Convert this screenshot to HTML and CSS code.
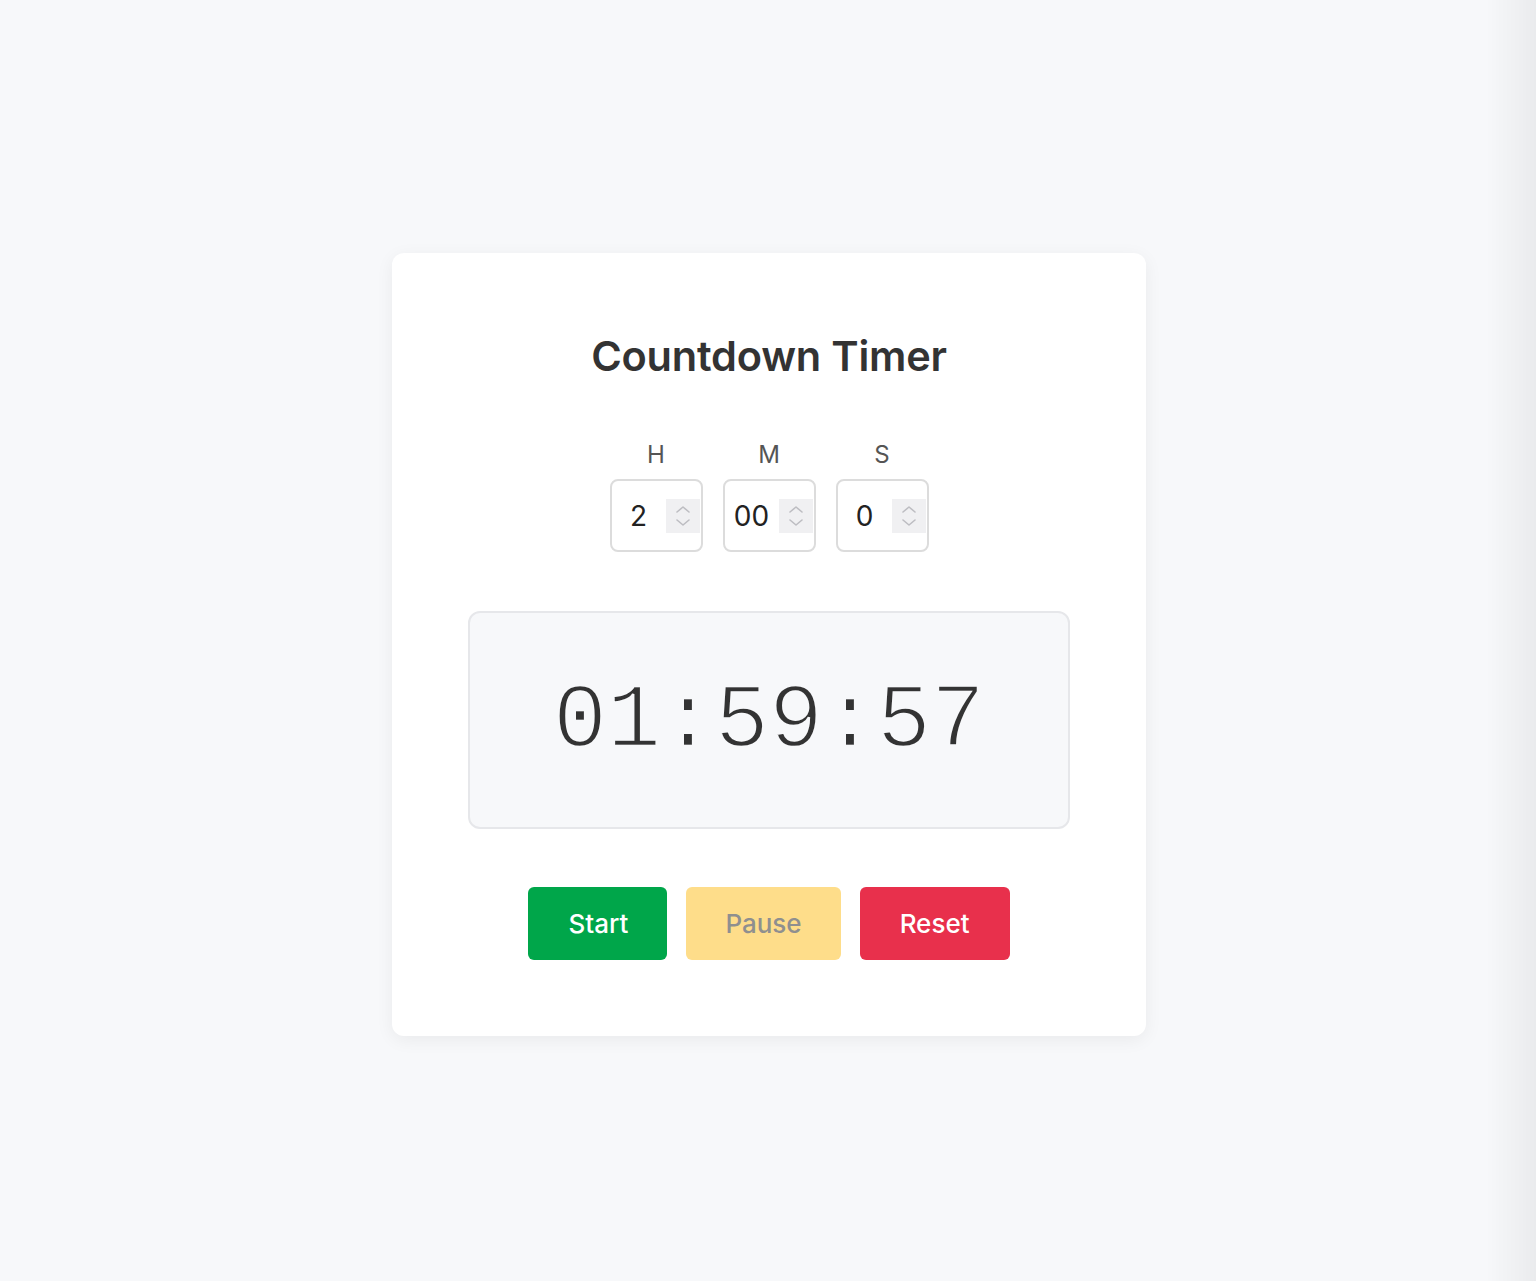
FILE: index.html
```html
<!DOCTYPE html>
<html lang="en">
<head>
<meta charset="utf-8">
<title>Countdown Timer</title>
<link rel="stylesheet" href="styles.css">
</head>
<body>
<div class="edge-shade"></div>
<main class="page">
  <section class="card">
    <h1 class="title">Countdown Timer</h1>
    <div class="fields">
      <div class="field">
        <span class="field-label">H</span>
        <div class="num-input">
          <span class="num-value">2</span>
          <span class="spinner">
            <svg viewBox="0 0 14 20" width="14" height="20"><path d="M1 6 L7 1 L13 6" /><path d="M1 14 L7 19 L13 14" /></svg>
          </span>
        </div>
      </div>
      <div class="field">
        <span class="field-label">M</span>
        <div class="num-input">
          <span class="num-value">00</span>
          <span class="spinner">
            <svg viewBox="0 0 14 20" width="14" height="20"><path d="M1 6 L7 1 L13 6" /><path d="M1 14 L7 19 L13 14" /></svg>
          </span>
        </div>
      </div>
      <div class="field">
        <span class="field-label">S</span>
        <div class="num-input">
          <span class="num-value">0</span>
          <span class="spinner">
            <svg viewBox="0 0 14 20" width="14" height="20"><path d="M1 6 L7 1 L13 6" /><path d="M1 14 L7 19 L13 14" /></svg>
          </span>
        </div>
      </div>
    </div>
    <div class="display">01:59:57</div>
    <div class="buttons">
      <button class="btn btn-start">Start</button>
      <button class="btn btn-pause" disabled>Pause</button>
      <button class="btn btn-reset">Reset</button>
    </div>
  </section>
</main>
</body>
</html>
```

FILE: styles.css
```css
* { box-sizing: border-box; }

html, body {
  margin: 0;
  padding: 0;
  background: #f7f8fa;
  font-family: Inter, "Noto Sans", "Liberation Sans", sans-serif;
}

.edge-shade {
  position: fixed;
  top: 0;
  right: 0;
  width: 50px;
  height: 100%;
  background: linear-gradient(to right, rgba(0,0,0,0), rgba(0,0,0,0.05));
  pointer-events: none;
}

.page {
  min-height: 1281px;
  display: flex;
  align-items: center;
  justify-content: center;
  padding-top: 8px;
  padding-left: 2px;
}

.card {
  width: 754px;
  background: #ffffff;
  border-radius: 12px;
  box-shadow: 0 4px 18px rgba(0, 0, 0, 0.06);
  padding: 76px 0 76px;
  display: flex;
  flex-direction: column;
  align-items: center;
}

.title {
  margin: 0;
  font-size: 41.5px;
  line-height: 54px;
  font-weight: 600;
  color: #333333;
  letter-spacing: -0.2px;
}

.fields {
  margin-top: 57px;
  display: flex;
  gap: 20px;
}

.field {
  display: flex;
  flex-direction: column;
  align-items: center;
  gap: 9px;
}

.field-label {
  font-size: 24px;
  line-height: 30px;
  color: #555555;
}

.num-input {
  width: 93px;
  height: 73px;
  border: 2px solid #dcdcdc;
  border-radius: 8px;
  display: flex;
  align-items: center;
  padding-right: 1px;
}

.num-value {
  flex: 1;
  text-align: center;
  font-size: 28px;
  color: #222222;
}

.spinner {
  width: 34px;
  height: 34px;
  background: #f0f0f2;
  display: flex;
  align-items: center;
  justify-content: center;
}

.spinner svg {
  fill: none;
  stroke: #bdbdc2;
  stroke-width: 1.6;
  stroke-linecap: round;
  stroke-linejoin: round;
}

.display {
  margin-top: 59px;
  width: 602px;
  height: 218px;
  background: #f7f8fa;
  border: 2px solid #e6e7ea;
  border-radius: 12px;
  display: flex;
  align-items: center;
  justify-content: center;
  padding-top: 4px;
  font-family: "Liberation Mono", "DejaVu Sans Mono", monospace;
  font-size: 90px;
  color: #333333;
  -webkit-text-stroke: 2.4px #f7f8fa;
  paint-order: fill stroke;
}

.buttons {
  margin-top: 58px;
  display: flex;
  gap: 19px;
}

.btn {
  height: 73px;
  padding: 0 39px;
  border: none;
  border-radius: 6px;
  font-family: Inter, "Noto Sans", "Liberation Sans", sans-serif;
  font-size: 26px;
  font-weight: 500;
  color: #ffffff;
  cursor: pointer;
}

.btn-start { background: #00a64a; padding: 0 39px 0 40px; }
.btn-reset { background: #e8304c; padding: 0 40px; }
.btn-pause {
  background: #fedd8a;
  color: #8f8f8f;
  cursor: default;
}
```
